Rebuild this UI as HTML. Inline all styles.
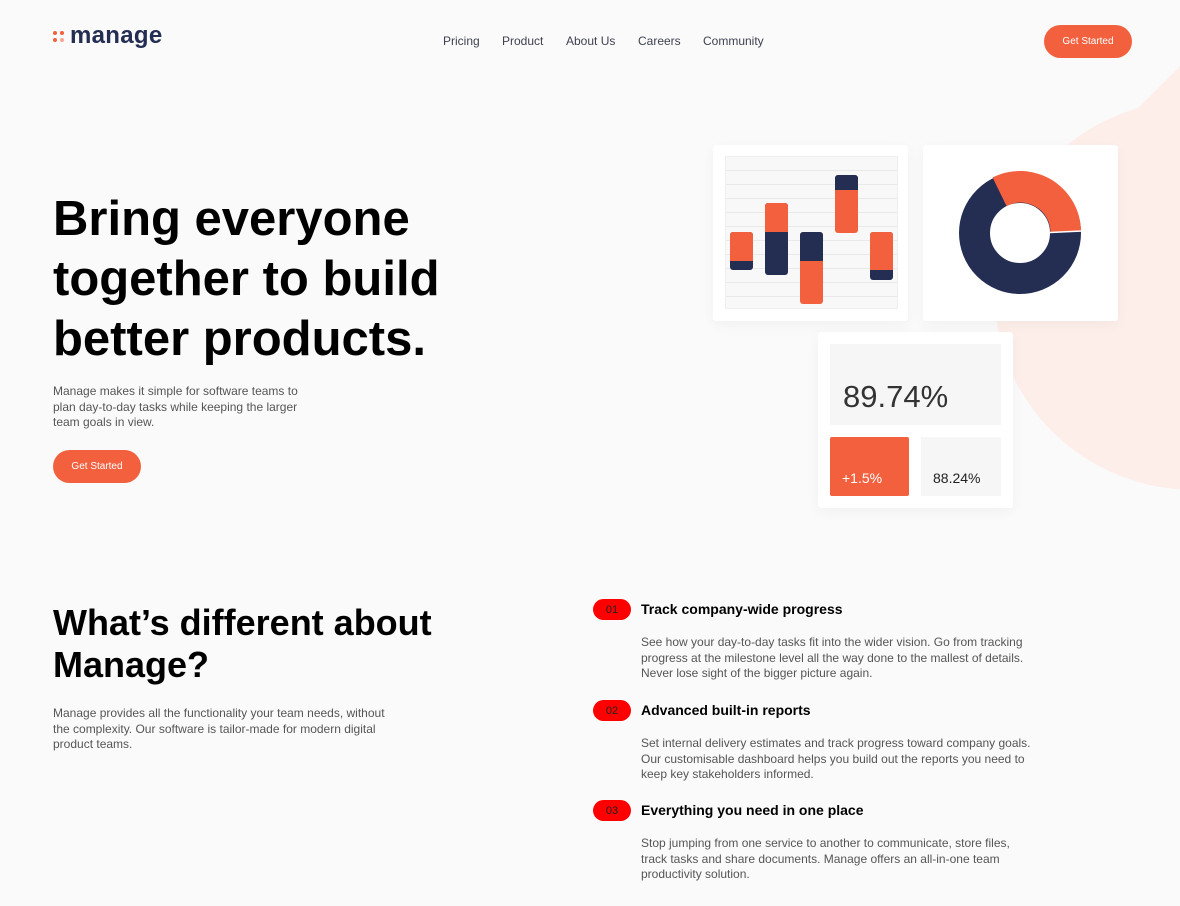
<!DOCTYPE html>
<html><head><meta charset="utf-8"><style>
*{margin:0;padding:0;box-sizing:border-box}
body{width:1180px;height:906px;background:#fafafa;font-family:"Liberation Sans",Arial,sans-serif;position:relative;overflow:hidden}
.abs{position:absolute}
.blob{position:absolute;left:995px;top:100px;width:400px;height:390px;border-radius:50%;background:#fdeeea}
.blob2{position:absolute;left:1080px;top:90px;width:260px;height:260px;background:#fdeeea;transform:rotate(45deg);border-radius:40px}
nav a{position:absolute;top:34px;font-size:12px;color:#3f4150;text-decoration:none}
.btn{position:absolute;background:#f2603e;color:#fff;font-size:10px;border-radius:17px;text-align:center}
h1{position:absolute;left:53px;top:189px;font-size:49px;line-height:60px;font-weight:700;color:#000}
.p{position:absolute;font-size:12px;line-height:15.5px;color:#555}
.card{position:absolute;background:#fff;border-radius:3px;box-shadow:0 4px 14px rgba(0,0,0,.04)}
.bar{position:absolute;width:23px;border-radius:3px;overflow:hidden}
.badge{position:absolute;left:593px;width:38px;height:21px;border-radius:11px;background:#ff0000;color:#222;font-size:11px;display:flex;align-items:center;justify-content:center}
.ft{position:absolute;left:641px;font-size:14px;font-weight:700;color:#000}
</style></head><body>
<div class="blob"></div><div class="blob2"></div>
<div class="abs" style="left:53px;top:31px;width:12px;height:12px">
<div class="abs" style="left:0;top:0;width:4px;height:4px;border-radius:50%;background:#f2603e"></div>
<div class="abs" style="left:7px;top:0;width:4px;height:4px;border-radius:50%;background:#f2603e"></div>
<div class="abs" style="left:0;top:7px;width:4px;height:4px;border-radius:50%;background:#f2603e"></div>
<div class="abs" style="left:7px;top:7px;width:4px;height:4px;border-radius:50%;background:#f5a794"></div>
</div>
<div class="abs" style="left:70px;top:22px;font-size:24px;font-weight:700;color:#242d52;letter-spacing:0.3px">manage</div>
<nav><a style="left:443px">Pricing</a><a style="left:502px">Product</a><a style="left:566px">About Us</a><a style="left:638px">Careers</a><a style="left:703px">Community</a></nav>
<div class="btn" style="left:1044px;top:25px;width:88px;height:33px;line-height:33px">Get Started</div>
<h1>Bring everyone<br>together to build<br>better products.</h1>
<div class="p" style="left:53px;top:384px;width:260px">Manage makes it simple for software teams to plan day-to-day tasks while keeping the larger team goals in view.</div>
<div class="btn" style="left:53px;top:450px;width:88px;height:33px;line-height:33px">Get Started</div>

<div class="card" style="left:713px;top:145px;width:195px;height:176px">
<div class="abs" style="left:12px;top:11px;width:173px;height:153px;background:#f8f8f8;border:1px solid #eee;background-image:repeating-linear-gradient(#f8f8f8 0,#f8f8f8 13px,#e9e9e9 13px,#e9e9e9 14px)"></div>
</div>
<div class="bar" style="left:730px;top:232px;height:38px;background:#242d52"><div style="height:29px;background:#f2603e"></div></div>
<div class="bar" style="left:765px;top:203px;height:72px;background:#242d52"><div style="height:29px;background:#f2603e"></div></div>
<div class="bar" style="left:800px;top:232px;height:72px;background:#f2603e"><div style="height:29px;background:#242d52"></div></div>
<div class="bar" style="left:835px;top:175px;height:58px;background:#f2603e"><div style="height:15px;background:#242d52"></div></div>
<div class="bar" style="left:870px;top:232px;height:48px;background:#242d52"><div style="height:38px;background:#f2603e"></div></div>

<div class="card" style="left:923px;top:145px;width:195px;height:176px">
<svg width="195" height="176" style="position:absolute;left:0;top:0">
<circle cx="97" cy="88" r="45.5" fill="none" stroke="#242d52" stroke-width="31"/>
<path d="M69.6 32.5 A61 61 0 0 1 158 86 L127.5 87 A30 30 0 0 0 83.5 61 Z" fill="#f2603e"/>
<line x1="127" y1="87.5" x2="159" y2="86" stroke="#fff" stroke-width="1.5"/>
</svg></div>

<div class="card" style="left:818px;top:332px;width:195px;height:176px">
<div class="abs" style="left:12px;top:12px;width:171px;height:81px;background:#f6f6f6"></div>
<div class="abs" style="left:25px;top:47px;font-size:31px;color:#333">89.74%</div>
<div class="abs" style="left:12px;top:105px;width:79px;height:59px;background:#f2603e;border-radius:2px"></div>
<div class="abs" style="left:24px;top:138px;font-size:14px;color:#fff">+1.5%</div>
<div class="abs" style="left:103px;top:105px;width:80px;height:59px;background:#f6f6f6"></div>
<div class="abs" style="left:115px;top:138px;font-size:14px;color:#222">88.24%</div>
</div>

<div class="abs" style="left:53px;top:602px;font-size:36px;line-height:42px;font-weight:700;color:#000">What’s different about<br>Manage?</div>
<div class="p" style="left:53px;top:706px;width:340px">Manage provides all the functionality your team needs, without the complexity. Our software is tailor-made for modern digital product teams.</div>

<div class="badge" style="top:599px">01</div><div class="ft" style="top:601px">Track company-wide progress</div>
<div class="p" style="left:641px;top:635px;width:395px">See how your day-to-day tasks fit into the wider vision. Go from tracking progress at the milestone level all the way done to the mallest of details. Never lose sight of the bigger picture again.</div>
<div class="badge" style="top:700px">02</div><div class="ft" style="top:702px">Advanced built-in reports</div>
<div class="p" style="left:641px;top:736px;width:395px">Set internal delivery estimates and track progress toward company goals. Our customisable dashboard helps you build out the reports you need to keep key stakeholders informed.</div>
<div class="badge" style="top:800px">03</div><div class="ft" style="top:802px">Everything you need in one place</div>
<div class="p" style="left:641px;top:836px;width:395px">Stop jumping from one service to another to communicate, store files, track tasks and share documents. Manage offers an all-in-one team productivity solution.</div>
</body></html>
